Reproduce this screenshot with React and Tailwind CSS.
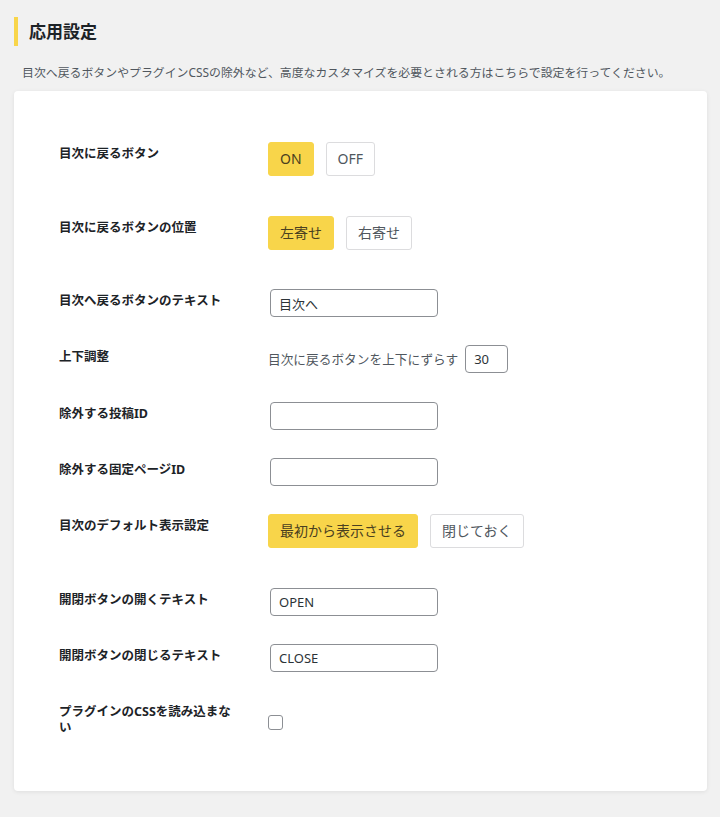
import { useState } from "react";

const font = {
  fontFamily: '"Noto Sans", "Noto Sans CJK JP", sans-serif',
};

const Label = ({ children }) => (
  <div className="w-[209px] shrink-0 pr-[29px] pt-[18px] text-[12.5px] font-bold leading-[16px] text-[#1d2327]">
    {children}
  </div>
);

const Toggle = ({ options, value, onChange }) => (
  <div className="flex gap-[12px]">
    {options.map((opt) => (
      <button
        key={opt}
        onClick={() => onChange(opt)}
        className={`h-[34px] rounded-[3px] border px-[11px] text-[14px] leading-none ${
          value === opt
            ? "border-[#f8d54a] bg-[#f8d54a] text-[#4a4020]"
            : "border-[#dcdcde] bg-white text-[#50575e]"
        }`}
      >
        {opt}
      </button>
    ))}
  </div>
);

const TextInput = ({ value, onChange, className = "w-[168px]" }) => (
  <input
    type="text"
    value={value}
    onChange={(e) => onChange(e.target.value)}
    className={`ml-[2px] h-[28px] rounded-[4px] border border-[#8c8f94] bg-white px-[8px] text-[13px] text-[#2c3338] outline-none ${className}`}
  />
);

const ButtonRow = ({ label, children }) => (
  <div className="flex h-[73.5px]">
    <Label>{label}</Label>
    <div className="pt-[14px]">{children}</div>
  </div>
);

const InputRow = ({ label, children }) => (
  <div className="flex h-[56.25px]">
    <Label>{label}</Label>
    <div className="pt-[14px]">{children}</div>
  </div>
);

export default function App() {
  const [backBtn, setBackBtn] = useState("ON");
  const [position, setPosition] = useState("左寄せ");
  const [backText, setBackText] = useState("目次へ");
  const [offset, setOffset] = useState("30");
  const [postIds, setPostIds] = useState("");
  const [pageIds, setPageIds] = useState("");
  const [display, setDisplay] = useState("最初から表示させる");
  const [openText, setOpenText] = useState("OPEN");
  const [closeText, setCloseText] = useState("CLOSE");
  const [noCss, setNoCss] = useState(false);

  return (
    <div
      className="min-h-screen bg-[#f1f1f1] pb-[26px] pl-[14px] pr-[13px] pt-[17px]"
      style={font}
    >
      <div className="flex h-[29px] items-center border-l-4 border-[#f8d54a] pl-[11px]">
        <h2 className="text-[17px] font-bold text-[#1d2327]">応用設定</h2>
      </div>
      <p className="ml-[8px] mt-[17px] text-[11.9px] leading-[18px] text-[#50575e]">
        目次へ戻るボタンやプラグインCSSの除外など、高度なカスタマイズを必要とされる方はこちらで設定を行ってください。
      </p>

      <div className="mt-[10px] rounded-[4px] bg-white pb-[55px] pl-[45px] pt-[37px] shadow-[0_1px_4px_rgba(0,0,0,0.08)]">
        <ButtonRow label="目次に戻るボタン">
          <Toggle options={["ON", "OFF"]} value={backBtn} onChange={setBackBtn} />
        </ButtonRow>
        <ButtonRow label="目次に戻るボタンの位置">
          <Toggle
            options={["左寄せ", "右寄せ"]}
            value={position}
            onChange={setPosition}
          />
        </ButtonRow>
        <InputRow label="目次へ戻るボタンのテキスト">
          <TextInput value={backText} onChange={setBackText} />
        </InputRow>
        <InputRow label="上下調整">
          <div className="flex items-center gap-[5px]">
            <span className="text-[12.7px] text-[#50575e]">
              目次に戻るボタンを上下にずらす
            </span>
            <TextInput
              value={offset}
              onChange={setOffset}
              className="w-[43px]"
            />
          </div>
        </InputRow>
        <InputRow label="除外する投稿ID">
          <TextInput value={postIds} onChange={setPostIds} />
        </InputRow>
        <InputRow label="除外する固定ページID">
          <TextInput value={pageIds} onChange={setPageIds} />
        </InputRow>
        <ButtonRow label="目次のデフォルト表示設定">
          <Toggle
            options={["最初から表示させる", "閉じておく"]}
            value={display}
            onChange={setDisplay}
          />
        </ButtonRow>
        <InputRow label="開閉ボタンの開くテキスト">
          <TextInput value={openText} onChange={setOpenText} />
        </InputRow>
        <InputRow label="開閉ボタンの閉じるテキスト">
          <TextInput value={closeText} onChange={setCloseText} />
        </InputRow>
        <div className="flex">
          <Label>プラグインのCSSを読み込まない</Label>
          <div className="pt-[29px]">
            <input
              type="checkbox"
              checked={noCss}
              onChange={(e) => setNoCss(e.target.checked)}
              className="block h-[15px] w-[15px] appearance-none rounded-[3px] border border-[#8c8f94] bg-white checked:bg-[#f8d54a]"
            />
          </div>
        </div>
      </div>
    </div>
  );
}
